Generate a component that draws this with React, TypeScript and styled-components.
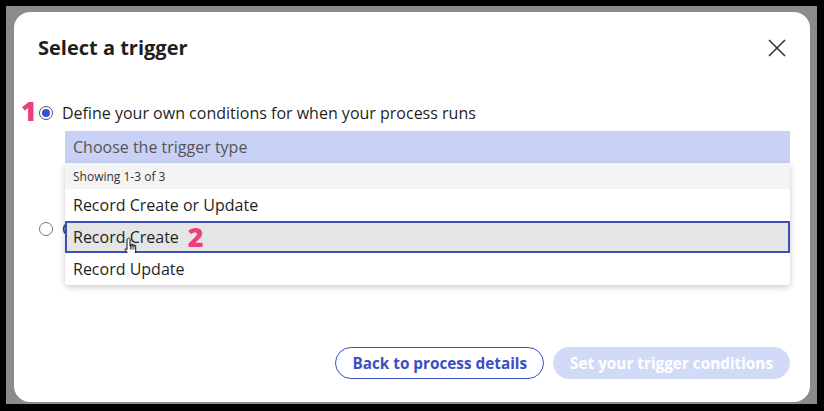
import React from 'react';
import styled, {createGlobalStyle} from 'styled-components';

const GlobalStyle = createGlobalStyle`
  html, body {
    margin: 0;
    padding: 0;
    background: #000;
  }
  body {
    font-family: "Open Sans", "Liberation Sans", sans-serif;
    color: #1f1f1f;
  }
  * {
    box-sizing: border-box;
  }
`;

const Frame = styled.div`
  width: 824px;
  height: 411px;
  background: #000;
  padding: 6px 7px 7px 6px;
  display: flex;
`;

const Backdrop = styled.div`
  flex: 1;
  display: flex;
  background: #8b8b8b;
  padding: 6px 7px 2px 8px;
`;

const Modal = styled.div`
  flex: 1;
  display: flex;
  flex-direction: column;
  background: #fff;
  border-radius: 16px;
  padding: 24px 20px 23px 24px;
`;

const Header = styled.div`
  display: flex;
  align-items: center;
  justify-content: space-between;
  height: 24px;
`;

const Title = styled.h2`
  margin: 0;
  font-size: 20px;
  line-height: 24px;
  font-weight: 700;
  color: #1f1f1f;
`;

const CloseButton = styled.button`
  border: 0;
  background: none;
  padding: 0;
  margin-right: 4px;
  width: 18px;
  height: 18px;
  display: flex;
  cursor: pointer;
`;

const RadioRow = styled.div<{ $top: number }>`
  position: relative;
  display: flex;
  align-items: center;
  gap: 9px;
  height: 20px;
  margin-top: ${(p) => p.$top}px;
  padding-left: 1px;
`;

const Radio = styled.span<{ $checked?: boolean }>`
  width: 14px;
  height: 14px;
  border-radius: 50%;
  border: 1px solid ${(p) => (p.$checked ? '#555' : '#777')};
  background: #fff;
  display: flex;
  align-items: center;
  justify-content: center;
  flex-shrink: 0;

  &::after {
    content: '';
    width: 8px;
    height: 8px;
    border-radius: 50%;
    background: ${(p) => (p.$checked ? '#3550d6' : 'transparent')};
  }
`;

const RadioLabel = styled.span`
  font-size: 16px;
  line-height: 20px;
  color: #1f1f1f;
  white-space: nowrap;
`;

const StepMarker = styled.span`
  color: #ec3f80;
  font-weight: 800;
  font-size: 27px;
  line-height: 20px;
`;

const FirstMarker = styled(StepMarker)`
  position: absolute;
  left: -17px;
  top: -2px;
`;

const SelectWrap = styled.div`
  position: relative;
  margin: 8px 0 0 27px;
  z-index: 2;
`;

const SelectBox = styled.div`
  height: 32px;
  display: flex;
  align-items: center;
  padding-left: 8px;
  background: #c9d1f6;
  font-size: 16px;
  color: #555;
`;

const Menu = styled.div`
  position: absolute;
  top: 100%;
  left: 0;
  right: 0;
  background: #fff;
  border-radius: 0 0 4px 4px;
  box-shadow: 0 2px 6px rgba(0, 0, 0, 0.22);
  overflow: hidden;
`;

const MenuInfo = styled.div`
  height: 26px;
  display: flex;
  align-items: center;
  padding-left: 8px;
  background: #f4f4f4;
  font-size: 12px;
  color: #333;
`;

const MenuItem = styled.div<{ $active?: boolean }>`
  position: relative;
  height: 32px;
  display: flex;
  align-items: center;
  padding-left: ${(p) => (p.$active ? '6px' : '8px')};
  font-size: 16px;
  color: #1f1f1f;
  background: ${(p) => (p.$active ? '#e5e5e5' : '#fff')};
  border: ${(p) => (p.$active ? '2px solid #3c4fb8' : '0')};
`;

const SecondMarker = styled(StepMarker)`
  margin-left: 9px;
`;

const Pointer = styled.svg`
  position: absolute;
  left: 57px;
  top: 14px;
`;

const Footer = styled.div`
  margin-top: auto;
  display: flex;
  justify-content: flex-end;
  gap: 9px;
`;

const PillButton = styled.button<{ $variant: 'outline' | 'disabled' }>`
  height: 32px;
  border-radius: 16px;
  padding: 0 16px;
  font-family: inherit;
  font-size: 15.3px;
  font-weight: 700;
  cursor: pointer;
  border: 1px solid ${(p) => (p.$variant === 'outline' ? '#3b4fc4' : '#d3daf8')};
  background: ${(p) => (p.$variant === 'outline' ? '#fff' : '#d3daf8')};
  color: ${(p) => (p.$variant === 'outline' ? '#3b4fc4' : '#fff')};
`;

const options = ['Record Create or Update', 'Record Create', 'Record Update'];

const HandCursor = () => (
  <Pointer width="15" height="20" viewBox="0 0 15 20">
    <path
      d="M4.5 1.2C5.4 1.2 6 1.9 6 2.8V9H6.4V7.6C6.4 6.7 7.9 6.7 7.9 7.6V9.2H8.3V8.1C8.3 7.2 9.8 7.2 9.8 8.1V9.4H10.2V8.8C10.2 7.9 11.7 7.9 11.7 8.8V13.6C11.7 15.4 10.9 16.8 10 18H5.1C4.2 17 2.3 14.6 1.3 12.9C0.8 12 1.8 11.2 2.6 11.9L3 12.4V2.8C3 1.9 3.6 1.2 4.5 1.2Z"
      fill="#fff"
      stroke="#111"
      strokeWidth="1"
      strokeLinejoin="round"
    />
    <path d="M6.4 9V12.5M7.9 9.2V12.5M9.8 9.4V12.5" stroke="#111" strokeWidth="0.8" />
  </Pointer>
);

export default function App() {
  return (
    <>
      <GlobalStyle />
      <Frame>
        <Backdrop>
          <Modal>
            <Header>
              <Title>Select a trigger</Title>
              <CloseButton aria-label="Close">
                <svg width="18" height="18" viewBox="0 0 18 18">
                  <path d="M1 1L17 17M17 1L1 17" stroke="#333" strokeWidth="1.6" />
                </svg>
              </CloseButton>
            </Header>

            <RadioRow $top={43}>
              <FirstMarker>1</FirstMarker>
              <Radio $checked />
              <RadioLabel>Define your own conditions for when your process runs</RadioLabel>
            </RadioRow>

            <SelectWrap>
              <SelectBox>Choose the trigger type</SelectBox>
              <Menu>
                <MenuInfo>Showing 1-3 of 3</MenuInfo>
                {options.map((o) => (
                  <MenuItem key={o} $active={o === 'Record Create'}>
                    {o}
                    {o === 'Record Create' && (
                      <>
                        <SecondMarker>2</SecondMarker>
                        <HandCursor />
                      </>
                    )}
                  </MenuItem>
                ))}
              </Menu>
            </SelectWrap>

            <RadioRow $top={56}>
              <Radio />
              <RadioLabel>On a schedule</RadioLabel>
            </RadioRow>

            <Footer>
              <PillButton $variant="outline">Back to process details</PillButton>
              <PillButton $variant="disabled">Set your trigger conditions</PillButton>
            </Footer>
          </Modal>
        </Backdrop>
      </Frame>
    </>
  );
}
